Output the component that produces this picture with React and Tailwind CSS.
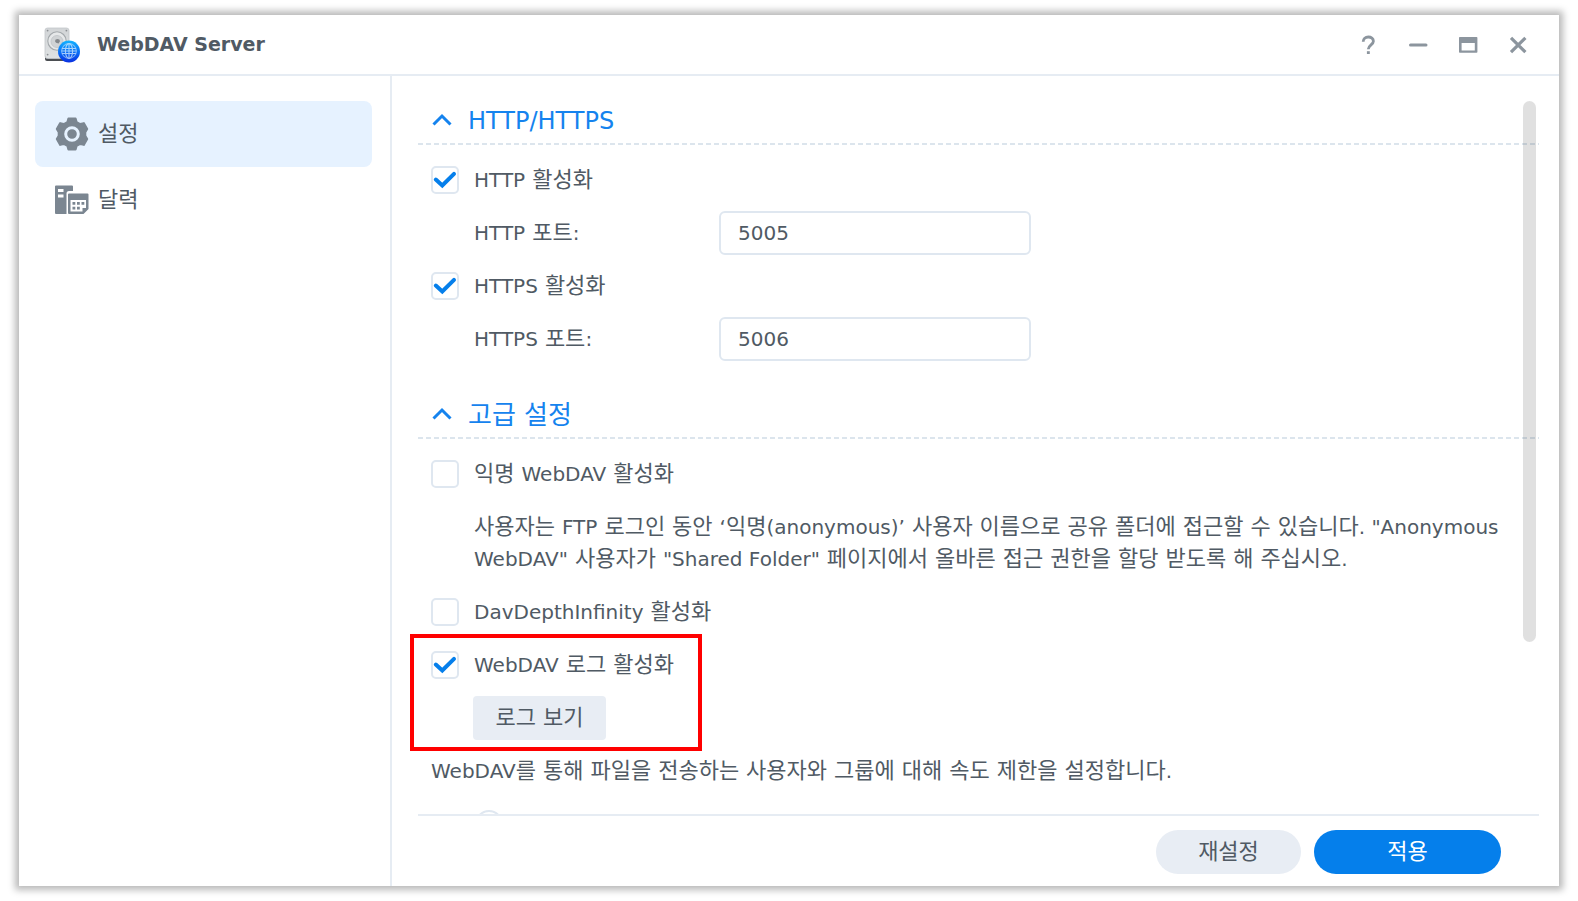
import React, { useState } from 'react';

const HANGUL_RUN = /(\s*[가-힣][가-힣\s]*)/;

// Sets Hangul runs slightly larger than the Latin text around them.
function Mixed({ text, hangulClass = 'text-[22px]' }) {
  return (
    <span>
      {text.split(HANGUL_RUN).map((part, i) =>
        i % 2 === 1 ? (
          <span key={i} className={hangulClass}>
            {part}
          </span>
        ) : (
          part
        ),
      )}
    </span>
  );
}

function ServerLogo() {
  return (
    <svg className="h-9 w-9 shrink-0" viewBox="0 0 36 36" aria-hidden="true">
      <defs>
        <linearGradient id="disk" x1="0" y1="0" x2="0" y2="1">
          <stop offset="0" stopColor="#d2d5d7" />
          <stop offset="1" stopColor="#dfe2e3" />
        </linearGradient>
        <linearGradient id="globe" x1="0" y1="0" x2="0" y2="1">
          <stop offset="0" stopColor="#13b4ff" />
          <stop offset="0.55" stopColor="#0a6cf5" />
          <stop offset="1" stopColor="#0a2fe0" />
        </linearGradient>
      </defs>
      <rect x="1" y="4" width="24" height="30" rx="2" fill="#4b4e52" />
      <rect x="1" y="1" width="24" height="30.5" rx="2.5" fill="url(#disk)" stroke="#c3c7ca" strokeWidth="0.8" />
      <circle cx="13" cy="14" r="9.2" fill="#e6e8e9" stroke="#a4a9ac" strokeWidth="1.1" />
      <circle cx="13" cy="14.5" r="6" fill="#d0d3d5" stroke="#bfc3c6" strokeWidth="0.8" />
      <path d="M11 14.2a2.4 2 0 0 1 5 0l-1.4 2.2-2.6-.6z" fill="#85898d" />
      <circle cx="3.6" cy="3.6" r="0.9" fill="#8b8f93" />
      <circle cx="22.4" cy="3.6" r="0.9" fill="#8b8f93" />
      <circle cx="3.6" cy="27.6" r="0.9" fill="#8b8f93" />
      <circle cx="25" cy="24.5" r="11" fill="url(#globe)" />
      <g fill="none" stroke="#d8ecff" strokeWidth="1.1" opacity="0.75">
        <circle cx="25" cy="24" r="7.4" opacity="0.7" />
        <ellipse cx="25" cy="24" rx="3.6" ry="7.4" />
        <path d="M25 16.500v15M18 21.500h14M18 26.500h14M17.600 24h14.800" />
      </g>
    </svg>
  );
}

function GearIcon() {
  return (
    <svg className="h-9 w-9 shrink-0" viewBox="0 0 36 36" aria-hidden="true">
      <path
        fill="#7b8691"
        stroke="#7b8691"
        strokeWidth="2"
        strokeLinejoin="round"
        d="M14.400 2.600h7.200l1 3.400 3.600 2 3.600-.9 3.400 6-1.900 3.100v3.600l1.900 3.100-3.400 6-3.600-.9-3.600 2-1 3.400h-7.200l-1-3.400-3.600-2-3.600.9-3.400-6 1.900-3.100v-3.600l-1.900-3.100 3.400-6 3.600.9 3.600-2z"
      />
      <circle cx="18" cy="18" r="6.300" fill="#7b8691" stroke="#e6f2ff" strokeWidth="3" />
    </svg>
  );
}

function CalendarIcon() {
  return (
    <svg className="h-9 w-9 shrink-0" viewBox="0 0 36 36" aria-hidden="true">
      <path fill="#7b8691" d="M1 4.500q0-1 1-1h16q1 0 1 1V9H15q-2.500 0-2.500 2.500V32H2q-1 0-1-1z" />
      <path fill="#fff" d="M4 7h5.500v3H4zM4 12.500h5.500v3H4z" />
      <path
        fill="#7b8691"
        fillRule="evenodd"
        d="M15 11.500h18.500q1 0 1 1V27l-5 5H15q-1 0-1-1V12.500q0-1 1-1zM16.500 18v11.500H28.500V26H32V18z"
      />
      <path fill="#7b8691" d="M18.500 20h2.800v2.800h-2.800zM23 20h2.800v2.800H23zM27.500 20h2.800v2.800h-2.800zM18.500 24.800h2.800v2.800h-2.800zM23 24.800h2.800v2.800H23z" />
    </svg>
  );
}

function WindowControls() {
  const button = 'flex h-8 w-[50px] items-center justify-center text-[#8c959e]';
  return (
    <div className="flex">
      <button type="button" aria-label="도움말" className={button}>
        <svg className="h-5 w-5" viewBox="0 0 20 20" fill="none" stroke="currentColor" strokeWidth="2.8">
          <path d="M5.200 6.800C5.200 3.700 7.400 2 10.300 2s5.100 1.700 5.100 4.300c0 3.400-5.100 3.900-5.100 8" />
          <path d="M8.900 17.600h2.900" />
        </svg>
      </button>
      <button type="button" aria-label="최소화" className={button}>
        <svg className="h-5 w-5" viewBox="0 0 20 20" fill="none" stroke="currentColor" strokeWidth="3" strokeLinecap="round">
          <path d="M2.500 10h15.500" />
        </svg>
      </button>
      <button type="button" aria-label="최대화" className={button}>
        <svg className="h-5 w-5" viewBox="0 0 20 20" fill="currentColor">
          <path fillRule="evenodd" d="M1.800 2h16.800q.8 0 .8.800v14.200q0 .8-.8.800H1.800q-.8 0-.8-.800V2.800q0-.8.800-.8zM3.600 8v7.600h13.200V8z" />
        </svg>
      </button>
      <button type="button" aria-label="닫기" className={button}>
        <svg className="h-5 w-5" viewBox="0 0 20 20" fill="none" stroke="currentColor" strokeWidth="3.2">
          <path d="M3 2.800l14.400 14.400M17.400 2.800L3 17.200" />
        </svg>
      </button>
    </div>
  );
}

function SectionHeader({ title }) {
  return (
    <h2>
      <button
        type="button"
        className="flex h-[42px] w-full items-center gap-4 pb-[2px] pl-[14px] text-left text-2xl text-[#1583ee]"
      >
        <svg className="h-5 w-5" viewBox="0 0 20 20" fill="none" stroke="currentColor" strokeWidth="3" aria-hidden="true">
          <path d="M1.500 13.500L10 5 18.500 13.500" />
        </svg>
        <Mixed text={title} hangulClass="text-[26px]" />
      </button>
      <div className="h-[2px] bg-[repeating-linear-gradient(90deg,#dce5ed_0_5px,transparent_5px_8px)]" />
    </h2>
  );
}

function CheckRow({ id, label, defaultChecked = false }) {
  const [checked, setChecked] = useState(defaultChecked);
  return (
    <div className="flex h-11 items-center gap-[15px]">
      <span className="grid h-7 w-7 shrink-0">
        <input
          id={id}
          type="checkbox"
          checked={checked}
          onChange={(e) => setChecked(e.target.checked)}
          className="col-start-1 row-start-1 h-7 w-7 appearance-none rounded-[5px] border-2 border-[#dfe7f0] bg-white"
        />
        {checked && (
          <svg
            className="pointer-events-none col-start-1 row-start-1 h-7 w-7"
            viewBox="0 0 28 28"
            fill="none"
            stroke="#057feb"
            strokeWidth="4"
            strokeLinecap="round"
            aria-hidden="true"
          >
            <path d="M4.800 13.500L11.300 19.500 23 7.800" />
          </svg>
        )}
      </span>
      <label htmlFor={id}>
        <Mixed text={label} />
      </label>
    </div>
  );
}

function PortRow({ id, label, value }) {
  return (
    <div className="flex h-11 items-center pl-[43px]">
      <label htmlFor={id} className="w-[245px] shrink-0">
        <Mixed text={label} />
      </label>
      <input
        id={id}
        type="text"
        defaultValue={value}
        className="h-11 w-[312px] rounded-md border-2 border-[#dfe7f0] bg-white px-[17px]"
      />
    </div>
  );
}

export default function App() {
  return (
    <div className="flex h-screen bg-white px-[19px] py-[15px] font-['DejaVu_Sans','Noto_Sans_CJK_KR',sans-serif] text-xl text-[#505a64]">
      <div className="flex min-w-0 flex-1 flex-col bg-white shadow-[0_0_7px_4px_rgba(0,0,0,0.28)]">
        <header className="flex h-[61px] shrink-0 items-center justify-between border-b-2 border-[#e6ecf3] pr-4 pl-[25px]">
          <div className="flex items-center gap-[17px]">
            <ServerLogo />
            <h1 className="text-[19px] font-bold">WebDAV Server</h1>
          </div>
          <WindowControls />
        </header>

        <div className="flex min-h-0 flex-1">
          <nav className="w-[373px] shrink-0 border-r-2 border-[#e6ecf3] pt-[25px] pr-[18px] pl-4">
            <a href="#settings" aria-current="page" className="flex h-[66px] items-center gap-2 rounded-lg bg-[#e6f2ff] pl-[19px]">
              <GearIcon />
              <Mixed text="설정" />
            </a>
            <a href="#calendar" className="flex h-[66px] items-center gap-2 rounded-lg pl-[19px]">
              <CalendarIcon />
              <Mixed text="달력" />
            </a>
          </nav>

          <main className="flex min-w-0 flex-1 flex-col pr-5 pl-[26px]">
            <div className="relative -ml-3 min-h-0 flex-1 overflow-hidden pt-[25px] pl-3">
              <SectionHeader title="HTTP/HTTPS" />
              <div className="flex flex-col gap-[9px] pt-[13px] pl-[13px]">
                <CheckRow id="http" label="HTTP 활성화" defaultChecked />
                <PortRow id="http-port" label="HTTP 포트:" value="5005" />
                <CheckRow id="https" label="HTTPS 활성화" defaultChecked />
                <PortRow id="https-port" label="HTTPS 포트:" value="5006" />
              </div>

              <div className="pt-[34px]">
                <SectionHeader title="고급 설정" />
              </div>
              <div className="flex flex-col gap-[9px] pt-[13px] pl-[13px]">
                <CheckRow id="anonymous" label="익명 WebDAV 활성화" />
                <p className="my-[6px] pr-6 pl-[43px] leading-8">
                  <Mixed
                    text={
                      '사용자는 FTP 로그인 동안 ‘익명(anonymous)’ 사용자 이름으로 공유 폴더에 접근할 수 있습니다. "Anonymous'
                    }
                  />{' '}
                  <Mixed
                    text={'WebDAV" 사용자가 "Shared Folder" 페이지에서 올바른 접근 권한을 할당 받도록 해 주십시오.'}
                  />
                </p>
                <CheckRow id="depth" label="DavDepthInfinity 활성화" />
                <div className="relative flex w-[249px] flex-col gap-[9px]">
                  <CheckRow id="log" label="WebDAV 로그 활성화" defaultChecked />
                  <button type="button" className="ml-[42px] h-11 w-[133px] rounded bg-[#e8edf4]">
                    <Mixed text="로그 보기" />
                  </button>
                  <div className="pointer-events-none absolute -top-[9px] -right-[22px] -bottom-[11px] -left-[21px] border-4 border-[#ff0000]" />
                </div>
                <p className="leading-[44px]">
                  <Mixed text="WebDAV를 통해 파일을 전송하는 사용자와 그룹에 대해 속도 제한을 설정합니다." />
                </p>
                <div className="flex h-11 items-center pl-[44px]">
                  <input
                    type="radio"
                    name="speed"
                    aria-label="속도 제한"
                    className="h-7 w-7 appearance-none rounded-full border-2 border-[#dfe7f0]"
                  />
                </div>
              </div>
              <div className="pointer-events-none absolute top-[25px] right-[3px] h-[541px] w-[13px] rounded-full bg-black/12" />
            </div>

            <footer className="flex shrink-0 justify-end gap-[13px] border-t-2 border-[#e6ecf3] pt-[14px] pr-[38px] pb-3">
              <button type="button" className="h-11 w-[145px] rounded-full bg-[#e8edf4]">
                <Mixed text="재설정" />
              </button>
              <button type="button" className="h-11 w-[187px] rounded-full bg-[#057feb] text-white">
                <Mixed text="적용" />
              </button>
            </footer>
          </main>
        </div>
      </div>
    </div>
  );
}
